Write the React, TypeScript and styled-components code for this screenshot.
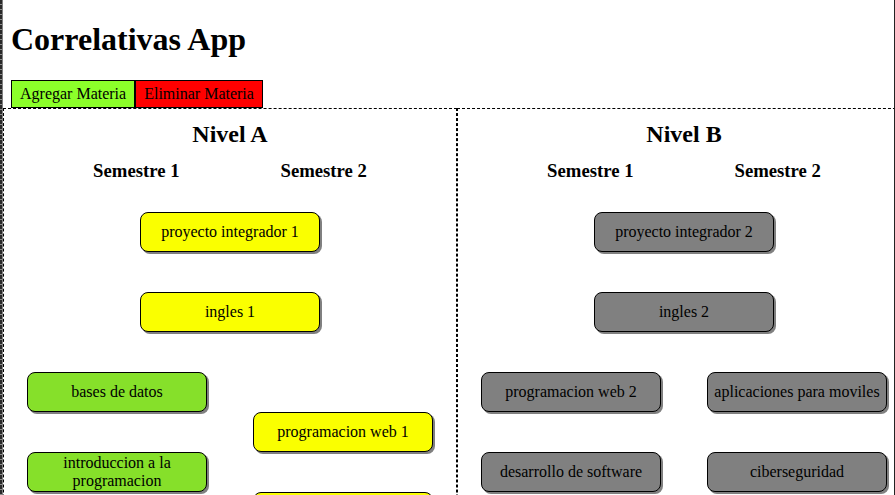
import React from "react";
import styled, { createGlobalStyle } from "styled-components";

const GlobalStyle = createGlobalStyle`
  * { box-sizing: border-box; }
  body {
    margin: 0;
    background: #fff;
    color: #000;
    font-family: "Liberation Serif", "Times New Roman", serif;
    font-size: 16px;
    line-height: 18px;
  }
`;

const Frame = styled.div`
  display: grid;
  grid-template-columns: 3px minmax(0, 1fr) 1px;
  height: 100vh;
  overflow: hidden;
`;

const DockEdge = styled.div`
  border-right: 1px solid #808080;
  background: repeating-linear-gradient(#2a2a2a 0 4px, #8c8c8c 4px 5px);
`;

const WindowEdge = styled.div`
  background: #232323;
`;

const Page = styled.main`
  overflow: hidden;
`;

const Header = styled.header`
  padding: 21px 8px 0;
`;

const Title = styled.h1`
  margin: 0 0 22px;
  font-size: 32px;
  line-height: 37px;
`;

const Toolbar = styled.div`
  display: flex;
`;

const ActionButton = styled.button<{ $color: string }>`
  height: 28px;
  padding: 0 8px;
  border: 1px solid #000;
  border-radius: 0;
  background: ${(p) => p.$color};
  color: #000;
  font: inherit;
  cursor: pointer;
`;

const Board = styled.div`
  display: flex;
`;

const Level = styled.section`
  flex: 1 0 454px;
  padding: 11px 0 20px;
  border: 1px dashed #000;
`;

const LevelTitle = styled.h2`
  margin: 0;
  font-size: 24px;
  line-height: 28px;
  text-align: center;
`;

const Semesters = styled.div`
  display: flex;
  justify-content: center;
  gap: 101px;
  margin: 12px 0 10px;
`;

const SemesterTitle = styled.h3`
  margin: 0;
  line-height: 22px;
`;

const Stack = styled.div`
  flex: 1;
  display: flex;
  flex-direction: column;
  align-items: center;
  justify-content: center;
`;

const Columns = styled.div`
  display: flex;
`;

const Subject = styled.article<{ $color: string }>`
  display: flex;
  align-items: center;
  justify-content: center;
  width: 180px;
  min-height: 40px;
  margin: 20px 0;
  border: 1px solid #000;
  border-radius: 8px;
  background: ${(p) => p.$color};
  box-shadow: 2px 2px 0 #808080;
  text-align: center;
`;

const colors = { passed: "#86e02a", open: "#faff00", locked: "#808080" };

type Status = keyof typeof colors;
type Item = { name: string; status: Status };
type LevelData = { name: string; annual: Item[]; first: Item[]; second: Item[] };

const item = (name: string, status: Status): Item => ({ name, status });

const levels: LevelData[] = [
  {
    name: "Nivel A",
    annual: [item("proyecto integrador 1", "open"), item("ingles 1", "open")],
    first: [
      item("bases de datos", "passed"),
      item("introduccion a la programacion", "passed"),
      item("", "passed"),
    ],
    second: [item("programacion web 1", "open"), item("", "open")],
  },
  {
    name: "Nivel B",
    annual: [item("proyecto integrador 2", "locked"), item("ingles 2", "locked")],
    first: [item("programacion web 2", "locked"), item("desarrollo de software", "locked")],
    second: [item("aplicaciones para moviles", "locked"), item("ciberseguridad", "locked")],
  },
];

function SubjectStack({ items }: { items: Item[] }) {
  return (
    <Stack>
      {items.map((s, index) => (
        <Subject key={index} $color={colors[s.status]}>
          {s.name}
        </Subject>
      ))}
    </Stack>
  );
}

export default function App() {
  return (
    <>
      <GlobalStyle />
      <Frame>
        <DockEdge />
        <Page>
          <Header>
            <Title>Correlativas App</Title>
            <Toolbar>
              <ActionButton type="button" $color="#8cff2a">Agregar Materia</ActionButton>
              <ActionButton type="button" $color="#ff0000">Eliminar Materia</ActionButton>
            </Toolbar>
          </Header>
          <Board>
            {levels.map((level) => (
              <Level key={level.name}>
                <LevelTitle>{level.name}</LevelTitle>
                <Semesters>
                  <SemesterTitle>Semestre 1</SemesterTitle>
                  <SemesterTitle>Semestre 2</SemesterTitle>
                </Semesters>
                <SubjectStack items={level.annual} />
                <Columns>
                  <SubjectStack items={level.first} />
                  <SubjectStack items={level.second} />
                </Columns>
              </Level>
            ))}
          </Board>
        </Page>
        <WindowEdge />
      </Frame>
    </>
  );
}
